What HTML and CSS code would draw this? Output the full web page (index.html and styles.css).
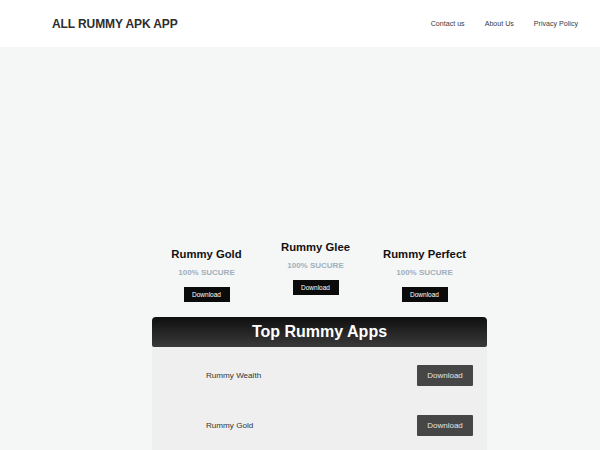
FILE: index.html
```html
<!DOCTYPE html>
<html lang="en">
<head>
<meta charset="utf-8">
<title>All Rummy APK App</title>
<link rel="stylesheet" href="styles.css">
</head>
<body>
<header class="site-header">
  <div class="brand">ALL RUMMY APK APP</div>
  <nav class="nav">
    <a href="#">Contact us</a>
    <a href="#">About Us</a>
    <a href="#">Privacy Policy</a>
  </nav>
</header>
<main class="main">
  <div class="wrap">
    <div class="cards">
      <div class="card card-low">
        <h3 class="card-title">Rummy Gold</h3>
        <p class="card-tag">100% SUCURE</p>
        <a class="card-btn" href="#">Download</a>
      </div>
      <div class="card">
        <h3 class="card-title">Rummy Glee</h3>
        <p class="card-tag">100% SUCURE</p>
        <a class="card-btn" href="#">Download</a>
      </div>
      <div class="card card-low">
        <h3 class="card-title">Rummy Perfect</h3>
        <p class="card-tag">100% SUCURE</p>
        <a class="card-btn" href="#">Download</a>
      </div>
    </div>
    <section class="list">
      <h2 class="list-head">Top Rummy Apps</h2>
      <div class="list-body">
        <div class="row">
          <span class="row-name">Rummy Wealth</span>
          <a class="row-btn" href="#">Download</a>
        </div>
        <div class="row">
          <span class="row-name">Rummy Gold</span>
          <a class="row-btn" href="#">Download</a>
        </div>
      </div>
    </section>
  </div>
</main>
</body>
</html>
```
FILE: styles.css
```css
* { box-sizing: border-box; }
html, body { margin: 0; padding: 0; }
body {
  background: #f5f6f6;
  font-family: "Liberation Sans", Arial, sans-serif;
  color: #222;
}
a { text-decoration: none; }

.site-header {
  height: 47px;
  background: #ffffff;
  display: flex;
  align-items: center;
  justify-content: space-between;
  padding: 0 22px 0 52px;
}
.brand {
  font-size: 12px;
  font-weight: bold;
  color: #2e2e2e;
  letter-spacing: -0.1px;
}
.nav {
  display: flex;
  gap: 20px;
}
.nav a {
  font-size: 7.1px;
  color: #3a3a3a;
}

.main {
  padding-top: 193px;
}
.wrap {
  width: 335px;
  margin-left: 152px;
}
.cards {
  display: flex;
  align-items: flex-start;
}
.card {
  width: 109px;
  display: flex;
  flex-direction: column;
  align-items: center;
}
.card-low { margin-top: 7px; }
.card-title {
  margin: 0;
  font-size: 11.3px;
  line-height: 14px;
  font-weight: bold;
  color: #111;
}
.card-tag {
  margin: 7px 0 0;
  font-size: 8px;
  line-height: 10px;
  font-weight: bold;
  color: #9fb0bd;
}
.card-btn {
  margin-top: 9px;
  width: 46px;
  height: 15px;
  background: #0b0b0b;
  color: #fff;
  font-size: 6.5px;
  display: flex;
  align-items: center;
  justify-content: center;
}

.list {
  margin-top: 15px;
}
.list-head {
  margin: 0;
  height: 30px;
  border-radius: 4px 4px 2px 2px;
  background: linear-gradient(#0f0f0f, #3a3a3a);
  color: #fff;
  font-size: 16px;
  font-weight: bold;
  display: flex;
  align-items: center;
  justify-content: center;
}
.list-body {
  background: #efefef;
  padding: 3px 14px 20px 54px;
}
.row {
  height: 50px;
  display: flex;
  align-items: center;
  justify-content: space-between;
}
.row-name {
  font-size: 8.1px;
  color: #333;
}
.row-btn {
  width: 56px;
  height: 21px;
  background: #464646;
  color: #e2e2e2;
  font-size: 8px;
  display: flex;
  align-items: center;
  justify-content: center;
  border-radius: 1px;
}
```
